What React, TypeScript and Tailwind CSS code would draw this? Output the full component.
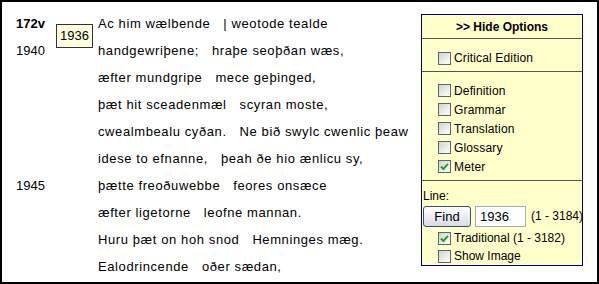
import React from 'react';

interface Verse {
    num?: string;
    bold?: boolean;
    a: string;
    b: string;
}

const verses: Verse[] = [
    { num: '172v', bold: true, a: 'Ac him wælbende', b: '| weotode tealde' },
    { num: '1940', a: 'handgewriþene;', b: 'hraþe seoþðan wæs,' },
    { a: 'æfter mundgripe', b: 'mece geþinged,' },
    { a: 'þæt hit sceadenmæl', b: 'scyran moste,' },
    { a: 'cwealmbealu cyðan.', b: 'Ne bið swylc cwenlic þeaw' },
    { a: 'idese to efnanne,', b: 'þeah ðe hio ænlicu sy,' },
    { num: '1945', a: 'þætte freoðuwebbe', b: 'feores onsæce' },
    { a: 'æfter ligetorne', b: 'leofne mannan.' },
    { a: 'Huru þæt on hoh snod', b: 'Hemninges mæg.' },
    { a: 'Ealodrincende', b: 'oðer sædan,' },
];

// checkbox in the old XP look
const Check = ({ checked }: { checked?: boolean }) => (
    <span className="relative inline-block w-[13px] h-[13px] border border-[#5c6670] bg-linear-to-br from-[#d4d4cc] to-white shrink-0">
        {checked && (
            <svg viewBox="0 0 11 11" className="absolute left-0 top-0 w-[11px] h-[11px]">
                <path d="M2 5.5 L4.3 8 L9 2.8" fill="none" stroke="#21a121" strokeWidth="2" />
            </svg>
        )}
    </span>
);

const Option = ({ label, checked }: { label: string; checked?: boolean }) => (
    <div className="flex items-center h-[19px] pl-[16px] gap-[3px] tracking-[0.15px]">
        <Check checked={checked} />
        <span>{label}</span>
    </div>
);

export default function App() {
    return (
        <div
            className="relative w-[599px] h-[284px] border-2 border-black bg-white text-black flex overflow-hidden"
            style={{ fontFamily: '"Liberation Sans", Arial, sans-serif' }}
        >
            {/* texto do poema */}
            <div className="flex-1 pt-[8px] text-[13px]">
                {verses.map((v, i) => (
                    <div key={i} className="flex items-center h-[27px]">
                        <div className={`w-[96px] pl-[14px] shrink-0 ${v.bold ? 'font-bold' : ''}`}>{v.num}</div>
                        <div className="whitespace-nowrap tracking-[0.6px]">
                            <span>{v.a}</span>
                            <span className="ml-[13px]">{v.b}</span>
                        </div>
                    </div>
                ))}
            </div>

            {/* etiqueta da linha */}
            <div className="absolute left-[54px] top-[22px] w-[37px] h-[24px] border border-[#333] bg-[#ffffe0] text-[13px] flex items-center justify-center">
                1936
            </div>

            {/* painel de opções */}
            <div className="w-[162px] h-[252px] mt-[12px] mr-[14px] border border-[#000080] bg-[#ffffcc] text-[12px] shrink-0 flex flex-col">
                <div className="h-[24px] shrink-0 flex items-center justify-center font-bold border-b border-[#555]">
                    &gt;&gt; Hide Options
                </div>
                <div className="h-[33px] shrink-0 flex flex-col justify-center border-b border-[#555] pt-[6px]">
                    <Option label="Critical Edition" />
                </div>
                <div className="pt-[9px] pb-[4px] border-b border-[#555]">
                    <Option label="Definition" />
                    <Option label="Grammar" />
                    <Option label="Translation" />
                    <Option label="Glossary" />
                    <Option label="Meter" checked />
                </div>
                <div className="pl-[1px] pt-[6px]">
                    <div className="h-[18px] leading-[18px]">Line:</div>
                    <div className="flex items-center gap-[4px] h-[22px] whitespace-nowrap">
                        <button
                            type="button"
                            className="w-[48px] h-[21px] shrink-0 rounded-[3px] border border-[#3c4e6e] bg-linear-to-b from-white to-[#d6dae6] text-[13px] leading-none"
                        >
                            Find
                        </button>
                        <input
                            readOnly
                            value="1936"
                            className="w-[51px] h-[21px] shrink-0 border border-[#a5acb5] bg-white px-[4px] text-[13px] outline-none"
                        />
                        <span className="ml-[1px] whitespace-nowrap">(1 - 3184)</span>
                    </div>
                    <div className="mt-[2px]">
                        <div className="flex items-center h-[18px] pl-[15px] gap-[3px]">
                            <Check checked />
                            <span>Traditional (1 - 3182)</span>
                        </div>
                        <div className="flex items-center h-[18px] pl-[15px] gap-[3px]">
                            <Check />
                            <span>Show Image</span>
                        </div>
                    </div>
                </div>
            </div>
        </div>
    );
}
